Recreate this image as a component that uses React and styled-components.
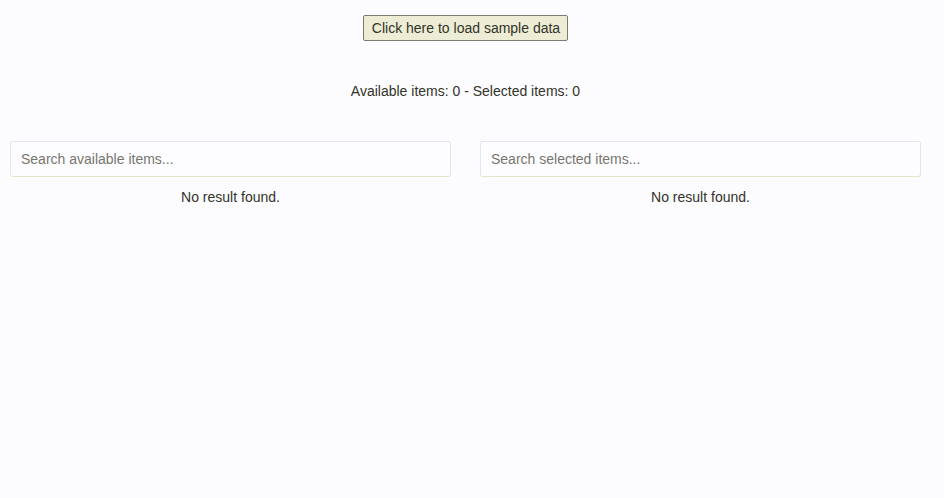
import React from "react";
import styled, { createGlobalStyle } from "styled-components";

const Global = createGlobalStyle`
  html, body { margin: 0; padding: 0; background: #fcfcff; }
  body { font-family: "Liberation Sans", Arial, sans-serif; font-size: 14px; color: #333328; }
`;

const Page = styled.div`
  width: 911px;
  margin-left: 10px;
  padding-top: 15px;
  display: flex;
  flex-direction: column;
  align-items: center;
`;

const LoadButton = styled.button`
  font-family: "Liberation Sans", Arial, sans-serif;
  font-size: 14px;
  color: #333328;
  height: 26px;
  padding: 0 7px 0 8px;
  background: #ededd6;
  border: 1px solid #7a7a70;
  border-radius: 2px;
`;

const Summary = styled.div`
  margin-top: 42px;
  line-height: 16px;
`;

const Columns = styled.div`
  margin-top: 42px;
  width: 100%;
  display: grid;
  grid-template-columns: 441px 441px;
  column-gap: 29px;
`;

const Column = styled.div`
  display: flex;
  flex-direction: column;
  align-items: center;
`;

const Search = styled.input`
  box-sizing: border-box;
  width: 100%;
  height: 36px;
  padding: 0 10px;
  font-family: "Liberation Sans", Arial, sans-serif;
  font-size: 14px;
  color: #333;
  background: #fdfdff;
  border: 1px solid #e6e4ee;
  border-top-color: #e4e0f6;
  border-bottom-color: #e6e4cc;
  border-radius: 3px;
  outline: none;
  &::placeholder { color: #76766f; }
`;

const Empty = styled.div`
  margin-top: 12px;
  line-height: 16px;
`;

export default function App() {
  return (
    <>
      <Global />
      <Page>
        <LoadButton>Click here to load sample data</LoadButton>
        <Summary>Available items: 0 - Selected items: 0</Summary>
        <Columns>
          <Column>
            <Search placeholder="Search available items..." />
            <Empty>No result found.</Empty>
          </Column>
          <Column>
            <Search placeholder="Search selected items..." />
            <Empty>No result found.</Empty>
          </Column>
        </Columns>
      </Page>
    </>
  );
}
